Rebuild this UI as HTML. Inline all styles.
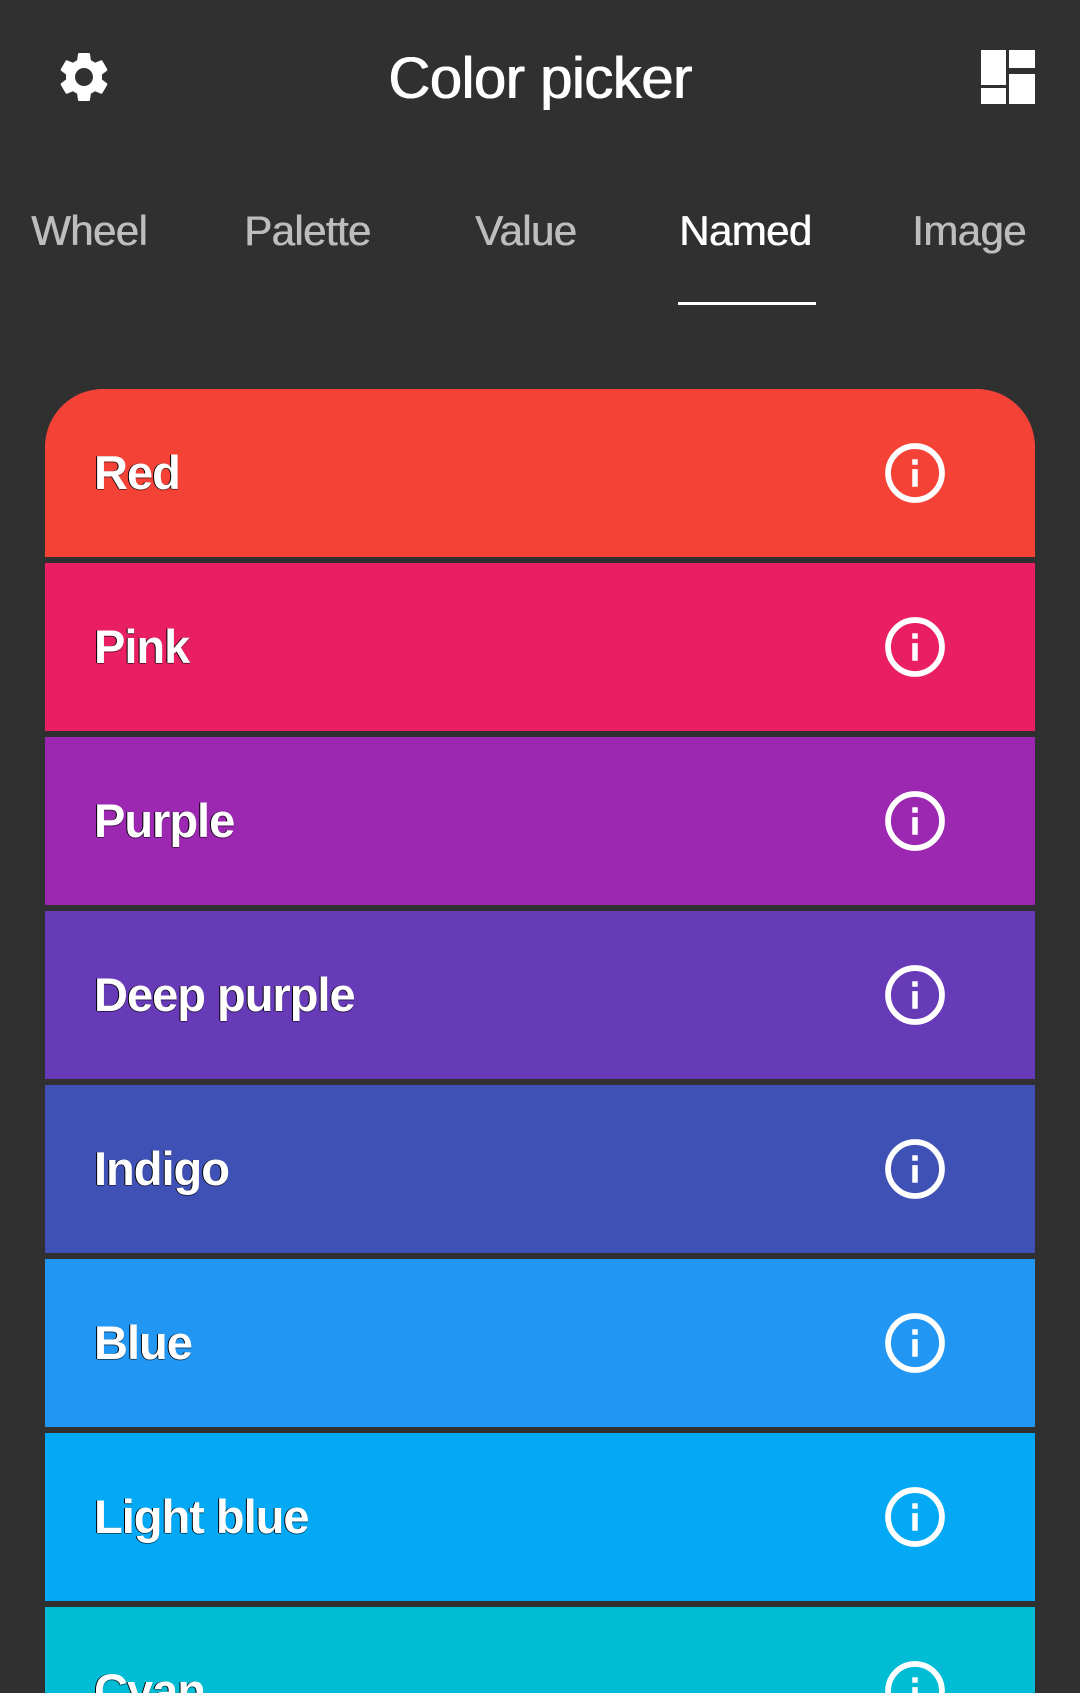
<!DOCTYPE html>
<html><head><meta charset="utf-8"><style>
html,body{margin:0;padding:0;background:#303030;width:1080px;height:1693px;overflow:hidden;font-family:"Liberation Sans",Roboto,sans-serif}
#wrap{position:relative;width:1080px;height:1693px;overflow:hidden}
.abs{position:absolute}
.title{left:0;width:1080px;text-align:center;top:44px;font-size:58px;color:#fff;line-height:70px;text-shadow:0.7px 0 0 #fff,-0.3px 0 0 #fff;letter-spacing:-0.5px}
.tab{top:206px;font-size:42px;line-height:50px;color:#bdbdbd;text-shadow:0.6px 0 0 currentColor;letter-spacing:-0.6px}
.row{position:absolute;left:45px;width:990px;height:168px;overflow:hidden}
.row span{position:absolute;left:49px;top:50px;font-size:47px;font-weight:bold;color:#fff;line-height:68px;letter-spacing:-1px;text-shadow:-1px 0 0 #000,0 1px 0 rgba(0,0,0,.5)}
.row svg{position:absolute;left:837px;top:51px}
</style></head><body><div id="wrap">
<svg class="abs" style="left:54px;top:47px" width="60" height="60" viewBox="0 0 24 24"><path fill="#fff" d="M19.14 12.94c.04-.3.06-.61.06-.94 0-.32-.02-.64-.07-.94l2.03-1.58a.49.49 0 0 0 .12-.61l-1.920-3.32a.488.488 0 0 0-.59-.22l-2.39.96c-.5-.38-1.03-.7-1.62-.94l-.36-2.540a.484.484 0 0 0-.48-.41h-3.84c-.24 0-.43.17-.47.41l-.36 2.54c-.59.24-1.130.57-1.62.94l-2.39-.96c-.22-.08-.47 0-.59.22L2.74 8.87c-.12.21-.08.47.12.61l2.03 1.58c-.05.3-.09.63-.09.94s.02.64.07.94l-2.03 1.58a.49.49 0 0 0-.12.61l1.92 3.32c.12.22.37.29.59.22l2.39-.96c.5.38 1.03.7 1.62.94l.36 2.54c.05.24.24.41.48.41h3.84c.24 0 .44-.17.47-.41l.36-2.54c.59-.24 1.13-.56 1.62-.94l2.39.96c.22.08.47 0 .59-.22l1.92-3.32c.12-.22.07-.47-.12-.61l-2.01-1.58zM12 15.6c-1.98 0-3.6-1.62-3.6-3.6s1.62-3.6 3.6-3.6 3.6 1.62 3.6 3.6-1.62 3.6-3.6 3.6z"/></svg>
<div class="abs title">Color picker</div>
<svg class="abs" style="left:981px;top:50px" width="54" height="54" viewBox="0 0 54 54" fill="#fff"><rect x="0" y="0" width="25" height="35"/><rect x="0" y="38" width="25" height="16"/><rect x="28" y="0" width="26" height="18"/><rect x="28" y="24" width="26" height="30"/></svg>
<div class="abs tab" style="left:31px">Wheel</div>
<div class="abs tab" style="left:244px">Palette</div>
<div class="abs tab" style="left:475px">Value</div>
<div class="abs tab" style="left:679px;color:#fff">Named</div>
<div class="abs tab" style="left:912px">Image</div>
<div class="abs" style="left:678px;top:302px;width:138px;height:3px;background:#fff"></div>

<div class="row" style="top:389px;background:#F44336;border-radius:58px 58px 0 0"><span>Red</span><svg width="66" height="66" viewBox="0 0 24 24"><circle cx="12" cy="12" r="9.8" fill="none" stroke="#fff" stroke-width="2.1"/><rect x="11" y="10.6" width="2" height="6.4" fill="#fff"/><rect x="11" y="7" width="2" height="2" fill="#fff"/></svg></div>
<div class="row" style="top:563px;background:#E91E63"><span>Pink</span><svg width="66" height="66" viewBox="0 0 24 24"><circle cx="12" cy="12" r="9.8" fill="none" stroke="#fff" stroke-width="2.1"/><rect x="11" y="10.6" width="2" height="6.4" fill="#fff"/><rect x="11" y="7" width="2" height="2" fill="#fff"/></svg></div>
<div class="row" style="top:737px;background:#9C27B0"><span>Purple</span><svg width="66" height="66" viewBox="0 0 24 24"><circle cx="12" cy="12" r="9.8" fill="none" stroke="#fff" stroke-width="2.1"/><rect x="11" y="10.6" width="2" height="6.4" fill="#fff"/><rect x="11" y="7" width="2" height="2" fill="#fff"/></svg></div>
<div class="row" style="top:911px;background:#673AB7"><span>Deep purple</span><svg width="66" height="66" viewBox="0 0 24 24"><circle cx="12" cy="12" r="9.8" fill="none" stroke="#fff" stroke-width="2.1"/><rect x="11" y="10.6" width="2" height="6.4" fill="#fff"/><rect x="11" y="7" width="2" height="2" fill="#fff"/></svg></div>
<div class="row" style="top:1085px;background:#3F51B5"><span>Indigo</span><svg width="66" height="66" viewBox="0 0 24 24"><circle cx="12" cy="12" r="9.8" fill="none" stroke="#fff" stroke-width="2.1"/><rect x="11" y="10.6" width="2" height="6.4" fill="#fff"/><rect x="11" y="7" width="2" height="2" fill="#fff"/></svg></div>
<div class="row" style="top:1259px;background:#2196F3"><span>Blue</span><svg width="66" height="66" viewBox="0 0 24 24"><circle cx="12" cy="12" r="9.8" fill="none" stroke="#fff" stroke-width="2.1"/><rect x="11" y="10.6" width="2" height="6.4" fill="#fff"/><rect x="11" y="7" width="2" height="2" fill="#fff"/></svg></div>
<div class="row" style="top:1433px;background:#03A9F4"><span>Light blue</span><svg width="66" height="66" viewBox="0 0 24 24"><circle cx="12" cy="12" r="9.8" fill="none" stroke="#fff" stroke-width="2.1"/><rect x="11" y="10.6" width="2" height="6.4" fill="#fff"/><rect x="11" y="7" width="2" height="2" fill="#fff"/></svg></div>
<div class="row" style="top:1607px;height:86px;background:#00BCD4"><span>Cyan</span><svg width="66" height="66" viewBox="0 0 24 24"><circle cx="12" cy="12" r="9.8" fill="none" stroke="#fff" stroke-width="2.1"/><rect x="11" y="10.6" width="2" height="6.4" fill="#fff"/><rect x="11" y="7" width="2" height="2" fill="#fff"/></svg></div>
</div></body></html>
